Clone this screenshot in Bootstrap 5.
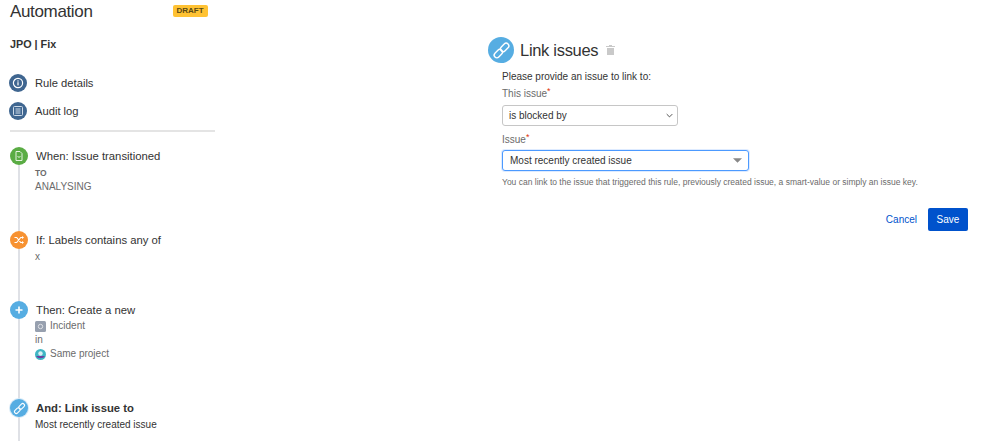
<!DOCTYPE html>
<html lang="en">
<head>
    <meta charset="UTF-8">
    <title>Automation</title>
    <meta name="viewport" content="width=device-width, initial-scale=1.0"/>
    <link href="https://cdn.jsdelivr.net/npm/bootstrap@5.3.0/dist/css/bootstrap.min.css" rel="stylesheet">
    <script src="https://cdn.jsdelivr.net/npm/bootstrap@5.3.3/dist/js/bootstrap.bundle.min.js"></script>
    <style>
        html, body { height: 441px; overflow: hidden; }
        body {
            background: #fff;
            font-family: "Liberation Sans", Arial, sans-serif;
            font-size: 12px;
            color: #333;
        }
        .page-wrap { height: 441px; overflow: hidden; }
        .side-col { width: 205px; margin-left: 10px; flex: none; }
        .main-col { flex: none; width: 480px; margin-left: 273px; padding-top: 37px; }
        .side-head { height: 24px; }
        .side-title { font-size: 17px; letter-spacing: -.35px; line-height: 24px; color: #333; font-weight: 400; margin: 0; }
        .draft-tag {
            background: #ffc233; color: #5c4a12; font-size: 8px; font-weight: 700;
            line-height: 12px; height: 12px; padding: 0 4px; border-radius: 2px;
            margin-left: 80px; margin-top: 5px;
        }
        .rule-name { font-size: 10.8px; font-weight: 700; line-height: 16px; margin-top: 12px; margin-bottom: 17px; color: #333; }
        .side-link { height: 28px; color: #333; font-size: 11.2px; margin-left: -1px; }
        .dot { width: 18px; height: 18px; border-radius: 50%; flex: none; margin-right: 8px; display: flex; align-items: center; justify-content: center; }
        .dot-navy { background: #3f6690; }
        .dot-green { background: #5aac44; }
        .dot-orange { background: #f79232; }
        .dot-blue { background: #56ade2; }
        .dot-active { box-shadow: 0 0 0 1px #d5e9f7; }
        .side-rule { border-top: 2px solid #e4e4e4; margin: 5px 0 15px; opacity: 1; }
        .step { display: flex; }
        .step-when { height: 84px; }
        .step-if { height: 70px; }
        .step-then { height: 98px; }
        .step-and { height: 42px; }
        .rail { width: 18px; margin-right: 8px; display: flex; flex-direction: column; align-items: center; flex: none; }
        .rail .dot { margin-right: 0; }
        .rail-line { width: 2px; background: #dfe1e6; flex-grow: 1; }
        .step-title { font-size: 11.3px; line-height: 18px; color: #333; }
        .step-sub { font-size: 10px; line-height: 14px; color: #6b6b6b; margin-left: -1px; }
        .step-sub.gap-top { margin-top: 1px; }
        .step-sub.dark { color: #333; }
        .to-label { font-size: 8.5px; font-weight: 700; color: #6b6b6b; line-height: 14px; margin-top: 1px; margin-left: -1px; }
        .mini-icon { width: 11px; height: 11px; margin-right: 4px; flex: none; }
        .panel-head { height: 26px; }
        .panel-icon { width: 26px; height: 26px; border-radius: 50%; background: #56ade2; margin-right: 6px; display: flex; align-items: center; justify-content: center; flex: none; }
        .panel-title { font-size: 16.5px; letter-spacing: -.3px; line-height: 26px; margin: 0; color: #333; font-weight: 400; }
        .panel-body { margin-left: 14px; padding-top: 7px; }
        .intro { font-size: 10px; line-height: 14px; color: #333; margin-bottom: 3px; }
        .field-label { font-size: 10px; line-height: 14px; color: #6b6b6b; margin: 0; display: block; }
        .req { color: #de350b; position: relative; top: -3px; font-size: 9px; }
        .form-select.sel-plain {
            width: 176px; height: 21px; min-height: 0; font-size: 10px; line-height: 14px; color: #333;
            padding: 2px 20px 2px 6px; margin-top: 4px; margin-bottom: 7px; border: 1px solid #c6c6c6; border-radius: 3px;
            background-image: url("data:image/svg+xml,%3csvg xmlns='http://www.w3.org/2000/svg' viewBox='0 0 10 6'%3e%3cpath fill='none' stroke='%23333' stroke-width='1.2' d='M1 1l4 4 4-4'/%3e%3c/svg%3e");
            background-position: right 4px center; background-size: 7px 5px;
            font-family: inherit;
        }
        .form-select.sel-focus {
            width: 247px; height: 21px; min-height: 0; font-size: 10px; line-height: 14px; color: #333;
            padding: 2px 20px 2px 7px; margin-top: 3px; border: 1px solid #4c9aff; border-radius: 3px;
            box-shadow: 0 0 0 1px #deebff; font-family: inherit;
            background-image: url("data:image/svg+xml,%3csvg xmlns='http://www.w3.org/2000/svg' viewBox='0 0 10 5'%3e%3cpath fill='%23888' d='M0 0h10L5 5z'/%3e%3c/svg%3e");
            background-position: right 6px center; background-size: 9px 5px;
        }
        .help { font-size: 8.5px; line-height: 12px; color: #6b6b6b; margin-top: 5px; }
        .act-row { margin-top: 20px; }
        .btn-cancel { color: #0052cc; font-size: 10px; padding: 0; border: 0; background: none; margin-right: 11px; }
        .btn-save { background: #0052cc; color: #fff; font-size: 10px; font-weight: 400; width: 40px; height: 23px; padding: 0; border: 0; border-radius: 2px; }
        .btn-save:hover { background: #0747a6; color: #fff; }
    </style>
</head>
<body>

<div class="page-wrap d-flex">

    <!-- Rule sidebar -->
    <div class="side-col">
        <div class="side-head d-flex align-items-start">
            <h1 class="side-title">Automation</h1>
            <span class="draft-tag">DRAFT</span>
        </div>
        <div class="rule-name">JPO | Fix</div>

        <div class="side-link d-flex align-items-center">
            <span class="dot dot-navy">
                <svg width="12" height="12" viewBox="0 0 12 12"><circle cx="6" cy="6" r="4.6" fill="none" stroke="#fff" stroke-width="1.2"/><rect x="5.4" y="5.2" width="1.2" height="3.2" fill="#fff"/><rect x="5.4" y="3.4" width="1.2" height="1.2" fill="#fff"/></svg>
            </span>
            Rule details
        </div>
        <div class="side-link d-flex align-items-center">
            <span class="dot dot-navy">
                <svg width="12" height="12" viewBox="0 0 12 12"><rect x="1.5" y="1.5" width="9" height="9" rx="1" fill="none" stroke="#cfdbe8" stroke-width="1"/><path d="M3.5 4h5M3.5 6h5M3.5 8h5" stroke="#cfdbe8" stroke-width="1"/></svg>
            </span>
            Audit log
        </div>
        <hr class="side-rule">

        <div class="step step-when">
            <div class="rail">
                <span class="dot dot-green">
                    <svg width="12" height="12" viewBox="0 0 12 12"><path d="M3 1.5h4l2 2v7H3z" fill="none" stroke="#e4f2e0" stroke-width="1"/><path d="M4.5 6.5q1.5 1.5 3 0" fill="none" stroke="#e4f2e0" stroke-width="1"/></svg>
                </span>
                <div class="rail-line"></div>
            </div>
            <div>
                <div class="step-title">When: Issue transitioned</div>
                <div class="to-label">TO</div>
                <div class="step-sub">ANALYSING</div>
            </div>
        </div>

        <div class="step step-if">
            <div class="rail">
                <span class="dot dot-orange">
                    <svg width="12" height="12" viewBox="0 0 12 12"><path d="M1.5 3.5h2.2l4 5h2.3M1.5 8.5h2.2l4-5h2.3" fill="none" stroke="#fff" stroke-width="1.2"/><path d="M9 2l2 1.5L9 5zM9 7l2 1.5L9 10z" fill="#fff"/></svg>
                </span>
                <div class="rail-line"></div>
            </div>
            <div>
                <div class="step-title">If: Labels contains any of</div>
                <div class="step-sub gap-top">x</div>
            </div>
        </div>

        <div class="step step-then">
            <div class="rail">
                <span class="dot dot-blue">
                    <svg width="10" height="10" viewBox="0 0 10 10"><path d="M5 1.5v7M1.5 5h7" stroke="#fff" stroke-width="1.6"/></svg>
                </span>
                <div class="rail-line"></div>
            </div>
            <div>
                <div class="step-title">Then: Create a new</div>
                <div class="step-sub d-flex align-items-center">
                    <svg class="mini-icon" viewBox="0 0 11 11"><rect width="11" height="11" rx="1.5" fill="#97a0af"/><circle cx="5.5" cy="5.5" r="2.2" fill="none" stroke="#dfe1e6" stroke-width="1"/></svg>
                    Incident
                </div>
                <div class="step-sub">in</div>
                <div class="step-sub d-flex align-items-center">
                    <svg class="mini-icon" viewBox="0 0 11 11"><circle cx="5.5" cy="5.5" r="5.5" fill="#3fb6c4"/><path d="M1 7h9a5 4 0 0 1-9 0z" fill="#6b3fa0"/><circle cx="5.5" cy="4.5" r="2.2" fill="#d9f0f4"/></svg>
                    Same project
                </div>
            </div>
        </div>

        <div class="step step-and">
            <div class="rail">
                <span class="dot dot-blue dot-active">
                    <svg width="13" height="13" viewBox="0 0 12 12"><g fill="none" stroke="#fff" stroke-width="1"><rect x="1" y="6.3" width="6" height="3.4" rx="1.7" transform="rotate(-45 4 8)"/><rect x="5" y="2.3" width="6" height="3.4" rx="1.7" transform="rotate(-45 8 4)"/></g></svg>
                </span>
                <div class="rail-line"></div>
            </div>
            <div>
                <div class="step-title fw-bold">And: Link issue to</div>
                <div class="step-sub dark gap-top">Most recently created issue</div>
            </div>
        </div>
    </div>

    <!-- Component config -->
    <div class="main-col">
        <div class="panel-head d-flex align-items-center">
            <span class="panel-icon">
                <svg width="19" height="19" viewBox="0 0 12 12"><g fill="none" stroke="#fff" stroke-width=".9"><rect x="1" y="6.3" width="6" height="3.4" rx="1.7" transform="rotate(-45 4 8)"/><rect x="5" y="2.3" width="6" height="3.4" rx="1.7" transform="rotate(-45 8 4)"/></g></svg>
            </span>
            <h2 class="panel-title">Link issues</h2>
            <svg class="ms-2" width="9" height="10" viewBox="0 0 9 10"><path d="M3 0h3v1h3v1H0V1h3zM1 3h7v7H1z" fill="#c9c9c9"/></svg>
        </div>
        <div class="panel-body">
            <div class="intro">Please provide an issue to link to:</div>
            <label class="field-label" for="linkType">This issue<span class="req">*</span></label>
            <select class="form-select sel-plain" id="linkType">
                <option>is blocked by</option>
            </select>
            <label class="field-label" for="linkIssue">Issue<span class="req">*</span></label>
            <select class="form-select sel-focus" id="linkIssue">
                <option>Most recently created issue</option>
            </select>
            <div class="help text-nowrap">You can link to the issue that triggered this rule, previously created issue, a smart-value or simply an issue key.</div>
            <div class="act-row d-flex justify-content-end align-items-center">
                <button type="button" class="btn-cancel">Cancel</button>
                <button type="button" class="btn btn-save">Save</button>
            </div>
        </div>
    </div>
</div>

</body>
</html>
